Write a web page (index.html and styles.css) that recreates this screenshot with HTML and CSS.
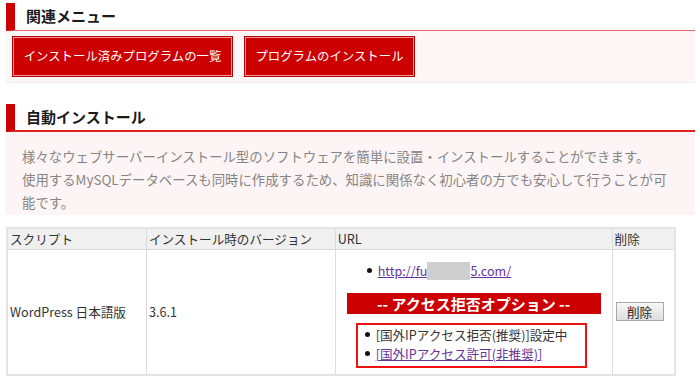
FILE: index.html
```html
<!DOCTYPE html>
<html lang="ja">
<head>
<meta charset="utf-8">
<title>自動インストール</title>
<link rel="stylesheet" href="styles.css">
</head>
<body>
<div class="page">
  <h2 class="heading heading-menu">関連メニュー</h2>
  <div class="menu">
    <a class="menu-btn btn-list" href="#">インストール済みプログラムの一覧</a>
    <a class="menu-btn btn-install" href="#">プログラムのインストール</a>
  </div>

  <h2 class="heading heading-auto">自動インストール</h2>
  <div class="desc">様々なウェブサーバーインストール型のソフトウェアを簡単に設置・インストールすることができます。<br>使用するMySQLデータベースも同時に作成するため、知識に関係なく初心者の方でも安心して行うことが可能です。</div>

  <table class="list">
    <colgroup>
      <col class="c1"><col class="c2"><col class="c3"><col class="c4">
    </colgroup>
    <thead>
      <tr><th>スクリプト</th><th>インストール時のバージョン</th><th>URL</th><th>削除</th></tr>
    </thead>
    <tbody>
      <tr>
        <td>WordPress 日本語版</td>
        <td>3.6.1</td>
        <td class="url-cell">
          <ul class="url-list"><li><a href="#">http://fu<span class="redact"></span>5.com/</a></li></ul>
          <div class="banner">-- アクセス拒否オプション --</div>
          <div class="optbox">
            <ul class="opt-list">
              <li>[国外IPアクセス拒否(推奨)]設定中</li>
              <li><a href="#">[国外IPアクセス許可(非推奨)]</a></li>
            </ul>
          </div>
        </td>
        <td class="del-cell"><button class="del-btn" type="button">削除</button></td>
      </tr>
    </tbody>
  </table>
</div>
</body>
</html>
```

FILE: styles.css
```css
* { box-sizing: border-box; }
html, body { margin: 0; padding: 0; background: #fff; }
body {
  font-family: "Noto Sans CJK JP", "Noto Sans", sans-serif;
  color: #333;
}
.page {
  padding: 3px 5px 0 6px;
  width: 700px;
}
.heading {
  margin: 0;
  height: 28px;
  border-left: 9px solid #cc0000;
  padding-left: 11px;
  font-size: 15px;
  font-weight: bold;
  line-height: 26px;
  color: #1a1a1a;
}
.heading-menu { border-bottom: 1px solid #e46a6a; }
.heading-auto { border-bottom: 2px solid #dd2222; margin-top: 21px; }

.menu {
  background: #fdf6f6;
  padding: 5px 6px;
  display: flex;
  gap: 11px;
  border-bottom: 1px solid #f0ecec;
}
.menu-btn {
  display: block;
  height: 41px;
  background: #cc0000;
  border: 1px solid #b80000;
  box-shadow: inset 0 0 0 1px #ee9a9a;
  color: #fff;
  text-decoration: none;
  font-size: 12.4px;
  line-height: 39px;
  padding: 0;
  white-space: nowrap;
  text-align: center;
}
.btn-list { width: 221px; }
.btn-install { width: 171px; }

.desc {
  background: #fdf5f5;
  padding: 13px 22px 1px 16px;
  font-size: 13.4px;
  line-height: 23px;
  color: #858585;
}

.list {
  margin-top: 12px;
  width: 670px;
  border-collapse: collapse;
  border: 2px solid #e4e4e4;
  font-size: 12.6px;
  color: #333;
}
.c1 { width: 140px; }
.c2 { width: 190px; }
.c3 { width: 277px; }
.c4 { width: 63px; }
.list th, .list td {
  border: 1px solid #dcdcdc;
  padding: 0 2px;
  text-align: left;
  font-weight: normal;
}
.list th {
  background: #f0f0f0;
  height: 21px;
  line-height: 19px;
}
.list td { vertical-align: middle; }
.list td.url-cell { padding: 12px 11px 6px 11px; vertical-align: top; }
.url-list, .opt-list {
  list-style: none;
  margin: 0;
  padding: 0;
}
.url-list { padding-left: 20px; line-height: 18px; }
.url-list li, .opt-list li {
  display: flex;
  align-items: center;
  gap: 6px;
}
.url-list li::before, .opt-list li::before {
  content: "";
  width: 5px;
  height: 5px;
  border-radius: 50%;
  background: #111;
  flex: none;
}
.list a { color: #663399; text-decoration: underline; }
.redact {
  display: inline-block;
  width: 43px;
  height: 18px;
  background: #cfcfcf;
  vertical-align: top;
}
.banner {
  margin-top: 13px;
  background: #cc0000;
  color: #fff;
  font-weight: bold;
  font-size: 15px;
  height: 21px;
  line-height: 21px;
  text-align: center;
}
.optbox {
  margin: 9px 0 0 9px;
  width: 231px;
  border: 2px solid #ee1111;
  padding: 0 0 3px 7px;
  line-height: 19px;
}
.list td.del-cell { padding: 0 3px; }
.del-btn {
  display: block;
  width: 48px;
  height: 19px;
  padding: 0;
  border: 1px solid #a9a9a9;
  background: linear-gradient(#f7f7f7, #dedede);
  font-family: "Noto Sans CJK JP", sans-serif;
  font-size: 12.6px;
  line-height: 16px;
  color: #222;
}
```
